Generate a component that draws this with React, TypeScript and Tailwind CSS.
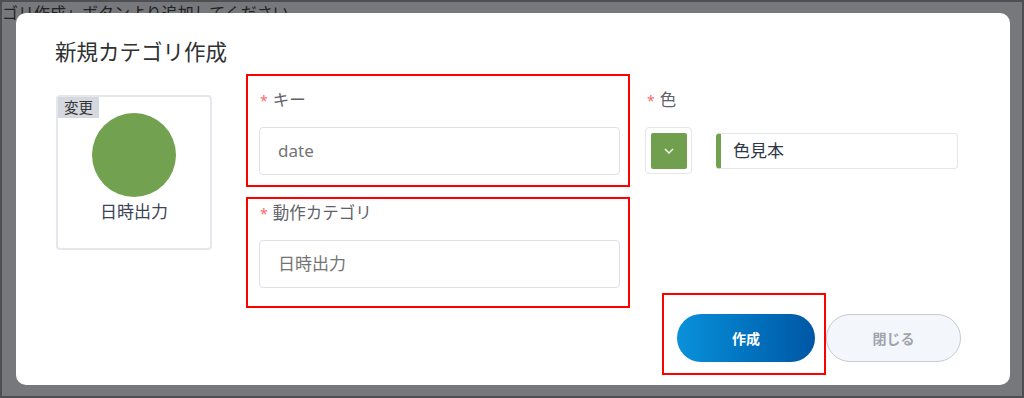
import React from "react";

const font = { fontFamily: "'Noto Sans', 'Noto Sans CJK JP', sans-serif" };

function Label({ text }: { text: string }) {
  return (
    <div className="flex items-center h-6 leading-6">
      <span className="text-[14px] text-[#f56c6c] mr-[5px] mt-[2px]">*</span>
      <span className="text-[16.5px] text-[#5f6268]">{text}</span>
    </div>
  );
}

function Field({ value }: { value: string }) {
  return (
    <div className="w-[361px] h-[48px] border border-[#dfe1e7] rounded-[4px] flex items-center pl-[18px] text-[17px] text-[#747474]">
      {value}
    </div>
  );
}

export default function App() {
  return (
    <div
      style={font}
      className="relative w-[1024px] h-[398px] bg-[#77787c] border-2 border-[#4e4f52] overflow-hidden"
    >
      <div className="absolute left-[0px] top-[-1px] text-[16px] leading-6 text-[#232325] whitespace-nowrap">
        ゴリ作成」ボタンより追加してください
      </div>

      <div className="absolute left-[14px] top-[11px] w-[994px] h-[372px] bg-white rounded-[10px] pl-[40px] pr-[49px] pt-[25px] flex flex-col">
        <div className="text-[21.5px] leading-7 text-[#303133] -ml-px">新規カテゴリ作成</div>

        <div className="mt-[8px] h-[301px] flex">
          {/* Left card */}
          <div className="mt-[21px] w-[156px] h-[155px] border-2 border-[#e6e7ec] rounded-[4px] relative flex flex-col items-center pt-[16px]">
            <div className="absolute left-0 top-0 w-[41px] h-[21px] bg-[#d5d8de] text-[14.5px] leading-[21px] text-[#333] text-center">
              変更
            </div>
            <div className="w-[84px] h-[84px] rounded-full bg-[#72a150]" />
            <div className="mt-[3px] text-[17px] leading-6 text-[#3b4455]">日時出力</div>
          </div>

          {/* Red boxes column */}
          <div className="ml-[34px] w-[384px] flex flex-col">
            <div className="h-[113px] border-2 border-[#ff0000] pt-[12px] pl-[11px]">
              <div className="ml-[1px]">
                <Label text="キー" />
              </div>
              <div className="mt-[15px]">
                <Field value="date" />
              </div>
            </div>
            <div className="mt-[10px] h-[111px] border-2 border-[#ff0000] pt-[2px] pl-[11px]">
              <div className="ml-[1px]">
                <Label text="動作カテゴリ" />
              </div>
              <div className="mt-[15px]">
                <Field value="日時出力" />
              </div>
            </div>
          </div>

          {/* Color column */}
          <div className="ml-[15px] flex-1 flex flex-col">
            <div className="pt-[14px] ml-[2px]">
              <Label text="色" />
            </div>
            <div className="mt-[15px] flex items-center">
              <div className="w-[47px] h-[47px] border border-[#e4e6eb] rounded-[4px] p-[5px]">
                <div className="w-[36px] h-[36px] rounded-[2px] bg-[#70a04e] flex items-center justify-center">
                  <svg width="10" height="6" viewBox="0 0 10 6">
                    <polyline points="1,1 5,5 9,1" fill="none" stroke="white" strokeWidth="1.4" />
                  </svg>
                </div>
              </div>
              <div className="ml-[24px] w-[242px] h-[36px] border border-[#e4e6eb] border-l-[5px] border-l-[#72a150] rounded-[4px] flex items-center pl-[12px] text-[17px] text-[#2f3848]">
                色見本
              </div>
            </div>

            <div className="mt-auto flex justify-end items-end">
              <div className="border-2 border-[#ff0000] pt-[19px] pb-[11px] pl-[13px] pr-[9px]">
                <button className="w-[138px] h-[48px] rounded-full bg-gradient-to-r from-[#0a91da] to-[#0057a5] text-white text-[14px] font-bold">
                  作成
                </button>
              </div>
              <div className="pb-[13px]">
                <button className="w-[135px] h-[48px] rounded-full bg-[#f3f6fb] border border-[#c7cad1] text-[#9fa3ab] text-[14px] font-bold">
                  閉じる
                </button>
              </div>
            </div>
          </div>
        </div>
      </div>
    </div>
  );
}
